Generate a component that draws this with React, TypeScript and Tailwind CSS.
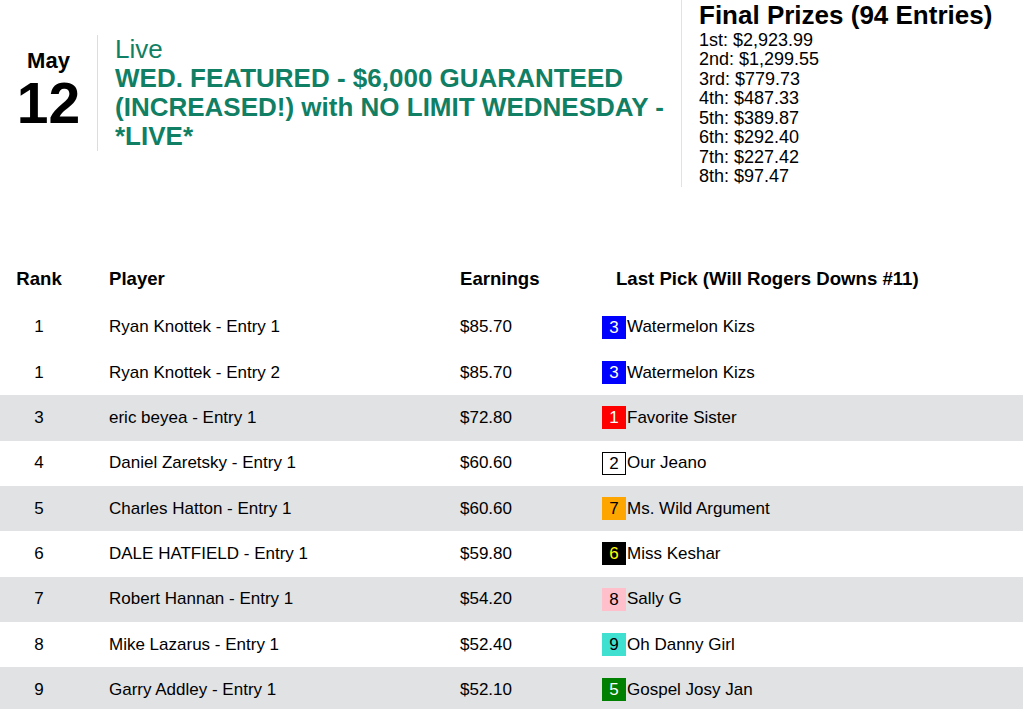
import React from "react";

// ── Data ──────────────────────────────────────────────────────────────────────

const prizes = [
  "1st: $2,923.99",
  "2nd: $1,299.55",
  "3rd: $779.73",
  "4th: $487.33",
  "5th: $389.87",
  "6th: $292.40",
  "7th: $227.42",
  "8th: $97.47",
];

// saddle cloth colours by program number
const cloth: Record<number, string> = {
  1: "bg-[#ff0000] text-white",
  2: "bg-white text-black border border-black",
  3: "bg-[#0000ff] text-white",
  5: "bg-[#008000] text-white",
  6: "bg-black text-[#ffff00]",
  7: "bg-[#ffa500] text-black",
  8: "bg-[#ffc0cb] text-black",
  9: "bg-[#40e0d0] text-black",
};

type Row = { rank: number; player: string; earnings: string; num: number; horse: string };

const rows: Row[] = [
  { rank: 1, player: "Ryan Knottek - Entry 1", earnings: "$85.70", num: 3, horse: "Watermelon Kizs" },
  { rank: 1, player: "Ryan Knottek - Entry 2", earnings: "$85.70", num: 3, horse: "Watermelon Kizs" },
  { rank: 3, player: "eric beyea - Entry 1", earnings: "$72.80", num: 1, horse: "Favorite Sister" },
  { rank: 4, player: "Daniel Zaretsky - Entry 1", earnings: "$60.60", num: 2, horse: "Our Jeano" },
  { rank: 5, player: "Charles Hatton - Entry 1", earnings: "$60.60", num: 7, horse: "Ms. Wild Argument" },
  { rank: 6, player: "DALE HATFIELD - Entry 1", earnings: "$59.80", num: 6, horse: "Miss Keshar" },
  { rank: 7, player: "Robert Hannan - Entry 1", earnings: "$54.20", num: 8, horse: "Sally G" },
  { rank: 8, player: "Mike Lazarus - Entry 1", earnings: "$52.40", num: 9, horse: "Oh Danny Girl" },
  { rank: 9, player: "Garry Addley - Entry 1", earnings: "$52.10", num: 5, horse: "Gospel Josy Jan" },
];

// ── Page ──────────────────────────────────────────────────────────────────────

export default function App() {
  return (
    <div className="min-h-[709px] bg-white text-black font-['Liberation_Sans',Arial,sans-serif]">
      {/* Tournament header */}
      <div className="flex items-start">
        <div className="flex items-start mt-[35px] flex-1">
          <div className="w-[97px] text-center pt-[13px] font-bold">
            <div className="text-[22px] leading-[26px]">May</div>
            <div className="text-[57px] leading-[58px]">12</div>
          </div>
          <div className="flex-1 border-l border-[#dddddd] pl-[17px] text-[#117f64]">
            <div className="text-[26px] leading-[29px]">Live</div>
            <div className="text-[26px] leading-[29px] font-bold">
              WED. FEATURED - $6,000 GUARANTEED (INCREASED!) with NO LIMIT WEDNESDAY - *LIVE*
            </div>
          </div>
        </div>
        <div className="w-[342px] border-l border-[#e2e2e2] pl-[17px]">
          <div className="text-[26px] leading-[31px] font-bold">Final Prizes (94 Entries)</div>
          {prizes.map((p) => (
            <div key={p} className="text-[18px] leading-[19.43px]">
              {p}
            </div>
          ))}
        </div>
      </div>

      {/* Standings */}
      <div className="mt-[70px]">
        <div className="flex items-center h-[45px] mb-[3px] text-[18.6px] font-bold">
          <div className="w-[78px] text-center">Rank</div>
          <div className="w-[382px] pl-[31px]">Player</div>
          <div className="w-[142px]">Earnings</div>
          <div className="flex-1 pl-[14px]">Last Pick (Will Rogers Downs #11)</div>
        </div>
        {rows.map((r, i) => (
          <div
            key={i}
            className={`flex items-center h-[45.35px] text-[17px] ${i % 2 === 0 && i > 0 ? "bg-[#e1e2e4]" : "bg-white"}`}
          >
            <div className="w-[78px] text-center">{r.rank}</div>
            <div className="w-[382px] pl-[31px]">{r.player}</div>
            <div className="w-[142px]">{r.earnings}</div>
            <div className="flex-1 flex items-center">
              <span className={`w-[24px] h-[23px] flex items-center justify-center leading-none box-border ${cloth[r.num]}`}>
                {r.num}
              </span>
              <span className="ml-[1px]">{r.horse}</span>
            </div>
          </div>
        ))}
      </div>
    </div>
  );
}
